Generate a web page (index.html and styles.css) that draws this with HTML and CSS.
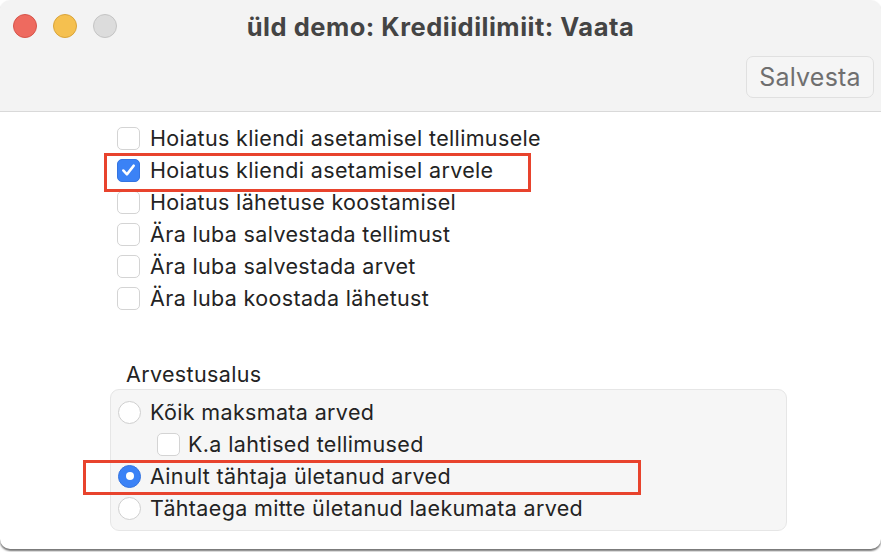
FILE: index.html
```html
<!DOCTYPE html>
<html lang="et">
<head>
<meta charset="utf-8">
<title>üld demo: Krediidilimiit: Vaata</title>
<link rel="stylesheet" href="styles.css">
</head>
<body>
<div class="window">
  <div class="toolbar">
    <div class="titlebar">
      <div class="lights">
        <span class="light red"></span>
        <span class="light yellow"></span>
        <span class="light gray"></span>
      </div>
      <div class="title">üld demo: Krediidilimiit: Vaata</div>
    </div>
    <div class="actions">
      <button class="btn">Salvesta</button>
    </div>
  </div>
  <div class="content">
    <div class="checks">
      <div class="row"><span class="cb"></span><span class="lbl">Hoiatus kliendi asetamisel tellimusele</span></div>
      <div class="row"><span class="cb on"><svg viewBox="0 0 24 24" width="24" height="24"><path d="M6 12.5 L10.2 17 L18 7" fill="none" stroke="#fff" stroke-width="2.8" stroke-linecap="round" stroke-linejoin="round"/></svg></span><span class="lbl">Hoiatus kliendi asetamisel arvele</span></div>
      <div class="row"><span class="cb"></span><span class="lbl">Hoiatus lähetuse koostamisel</span></div>
      <div class="row"><span class="cb"></span><span class="lbl">Ära luba salvestada tellimust</span></div>
      <div class="row"><span class="cb"></span><span class="lbl">Ära luba salvestada arvet</span></div>
      <div class="row"><span class="cb"></span><span class="lbl">Ära luba koostada lähetust</span></div>
      <div class="mark mark1"></div>
    </div>
    <div class="section">
      <div class="section-label">Arvestusalus</div>
      <div class="group">
        <div class="row"><span class="rb"></span><span class="lbl">Kõik maksmata arved</span></div>
        <div class="row sub"><span class="cb"></span><span class="lbl">K.a lahtised tellimused</span></div>
        <div class="row"><span class="rb on"></span><span class="lbl">Ainult tähtaja ületanud arved</span></div>
        <div class="row"><span class="rb"></span><span class="lbl">Tähtaega mitte ületanud laekumata arved</span></div>
      </div>
      <div class="mark mark2"></div>
    </div>
  </div>
</div>
</body>
</html>
```
FILE: styles.css
```css
* { box-sizing: border-box; }
html, body { margin: 0; padding: 0; }
body {
  width: 881px;
  height: 552px;
  background: #ffffff;
  font-family: Inter, "Liberation Sans", sans-serif;
  overflow: hidden;
}
.window {
  width: 881px;
  height: 549px;
  background: #ffffff;
  border-radius: 10px;
  box-shadow: 0 2px 2px 0 rgba(0,0,0,0.55);
  overflow: hidden;
  display: flex;
  flex-direction: column;
}
.toolbar {
  height: 112px;
  background: #f3f3f3;
  border-bottom: 1px solid #d9d9d9;
  display: flex;
  flex-direction: column;
}
.titlebar {
  height: 52px;
  position: relative;
  display: flex;
  align-items: center;
  justify-content: center;
}
.lights {
  position: absolute;
  left: 13px;
  top: 14px;
  display: flex;
  gap: 16px;
}
.light {
  width: 24px;
  height: 24px;
  border-radius: 50%;
  display: block;
}
.light.red { background: #ee6a5f; border: 1px solid #d6544a; }
.light.yellow { background: #f5c04f; border: 1px solid #d9a43a; }
.light.gray { background: #dcdcdc; border: 1px solid #c4c4c4; }
.title {
  font-size: 25.5px;
  font-weight: 700;
  color: #444444;
  letter-spacing: 0.5px;
}
.actions {
  display: flex;
  justify-content: flex-end;
  padding: 4px 7px 0 0;
}
.btn {
  width: 128px;
  height: 42px;
  border: 1px solid #e0e0e0;
  border-radius: 7px;
  background: #f5f5f5;
  color: #6f6f6f;
  font-family: Inter, "Liberation Sans", sans-serif;
  font-size: 25px;
  letter-spacing: 0.2px;
  padding: 0;
}
.content {
  flex: 1;
  padding-top: 10px;
}
.checks {
  position: relative;
  padding-left: 117px;
}
.row {
  height: 32px;
  display: flex;
  align-items: center;
}
.lbl {
  font-size: 21.5px;
  color: #232323;
  letter-spacing: 0.35px;
}
.cb {
  width: 23px;
  height: 23px;
  border-radius: 5px;
  border: 1px solid #d4d4d4;
  background: #ffffff;
  margin-right: 10px;
  display: flex;
  align-items: center;
  justify-content: center;
  flex: none;
}
.cb.on {
  background: #3b82f6;
  border-color: #3574e0;
}
.cb svg { width: 22px; height: 22px; }
.rb {
  width: 23px;
  height: 23px;
  border-radius: 50%;
  border: 1px solid #cfcfcf;
  background: #ffffff;
  margin-right: 9px;
  flex: none;
  display: flex;
  align-items: center;
  justify-content: center;
}
.rb.on {
  background: #3b82f6;
  border-color: #3574e0;
}
.rb.on::after {
  content: "";
  width: 8px;
  height: 8px;
  border-radius: 50%;
  background: #ffffff;
}
.section {
  position: relative;
  margin-top: 45px;
  padding-left: 110px;
  padding-right: 94px;
}
.section-label {
  font-size: 21.5px;
  color: #232323;
  padding-left: 16px;
  height: 30px;
  display: flex;
  align-items: center;
  letter-spacing: 0.35px;
}
.group {
  background: #f6f6f6;
  border: 1px solid #e6e6e6;
  border-radius: 9px;
  padding: 6px 0 6px 7px;
}
.group .row.sub { padding-left: 39px; }
.group .row.sub .cb { margin-right: 8px; }
.mark {
  position: absolute;
  border: 3px solid #e8432d;
}
.mark1 {
  left: 104px;
  top: 31px;
  width: 427px;
  height: 39px;
}
.mark2 {
  left: 83px;
  top: 101px;
  width: 558px;
  height: 35px;
}
```
